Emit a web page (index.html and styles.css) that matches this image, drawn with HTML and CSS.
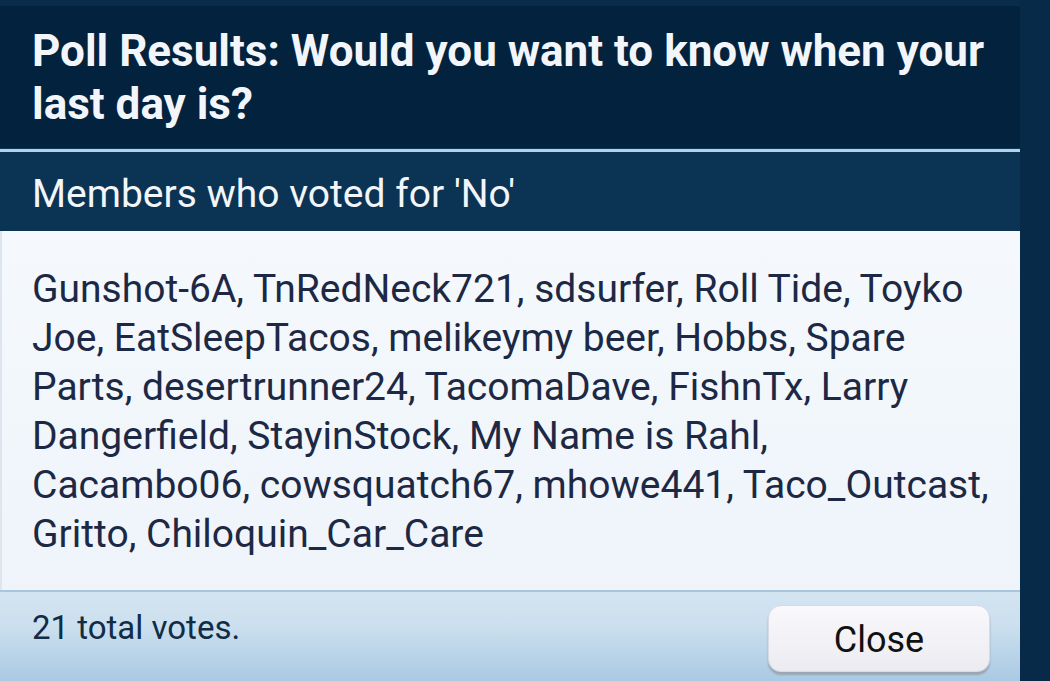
FILE: index.html
```html
<!DOCTYPE html>
<html lang="en">
<head>
    <meta charset="UTF-8">
    <title>Poll Results</title>
    <link rel="stylesheet" href="styles.css">
</head>
<body>
    <div class="screen">
        <div class="dialog">
            <div class="dialog-title">Poll Results: Would you want to know when your last day is?</div>
            <div class="dialog-sub">Members who voted for 'No'</div>
            <div class="dialog-body">
                Gunshot-6A, TnRedNeck721, sdsurfer, Roll Tide, Toyko Joe, EatSleepTacos, melikeymy beer, Hobbs, Spare Parts, desertrunner24, TacomaDave, FishnTx, Larry Dangerfield, StayinStock, My Name is Rahl, Cacambo06, cowsquatch67, mhowe441, Taco_Outcast, Gritto, Chiloquin_Car_Care
            </div>
            <div class="dialog-footer">
                <span class="total">21 total votes.</span>
                <button class="close-btn">Close</button>
            </div>
        </div>
        <div class="side"></div>
    </div>
</body>
</html>
```

FILE: styles.css
```css
body {
    margin: 0;
    padding: 0;
    font-family: Roboto, "Noto Sans", sans-serif;
    background-color: #062a48;
    overflow: hidden;
}

.screen {
    display: flex;
    width: 1050px;
    height: 681px;
}

.dialog {
    width: 1020px;
    display: flex;
    flex-direction: column;
    background: #f1f6fb;
}

.side {
    flex: 1;
    background-color: #062a48;
}

.dialog-title {
    background: linear-gradient(#0a2c4c 0, #0a2c4c 6px, #03223d 6px);
    color: #f2f6fb;
    font-size: 44px;
    font-weight: bold;
    line-height: 53px;
    padding: 25px 20px 0 32px;
    height: 123px;
    border-bottom: 1px solid #0d3a5e;
}

.dialog-sub {
    background-color: #0b3353;
    border-top: 3px solid #b7d0e3;
    color: #f2f6fb;
    font-size: 39px;
    height: 82px;
    line-height: 84px;
    padding-left: 32px;
    box-sizing: border-box;
}

.dialog-body {
    flex: 1;
    background: linear-gradient(#f5f9fd, #eef4fa);
    color: #1d2944;
    font-size: 39px;
    line-height: 49px;
    padding: 34px 30px 0 30px;
    border-left: 2px solid #dde6ee;
}

.dialog-footer {
    height: 89px;
    border-top: 2px solid #a9c6dc;
    background: linear-gradient(#d3e4f1, #cde0ef 35%, #a9cae3);
    display: flex;
    justify-content: space-between;
    align-items: flex-start;
    padding: 0 30px 0 32px;
}

.total {
    color: #102c47;
    font-size: 33px;
    margin-top: 16px;
}

.close-btn {
    margin-top: 13px;
    width: 222px;
    height: 67px;
    border: 1px solid #d6dbe4;
    border-radius: 13px;
    background: linear-gradient(#f9f9fc, #ebebf1);
    box-shadow: 0 3px 2px #9aa6b3;
    font-family: Roboto, sans-serif;
    font-size: 36px;
    color: #111;
    padding-top: 3px;
}
```
